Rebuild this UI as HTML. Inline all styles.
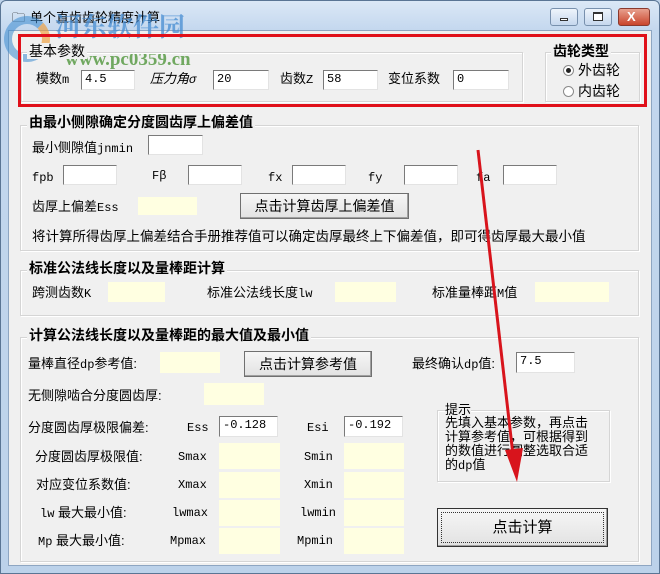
<!DOCTYPE html>
<html><head><meta charset="utf-8"><style>
*{margin:0;padding:0;box-sizing:border-box}
body{width:660px;height:574px;overflow:hidden;background:#bed3ea;font-family:"Liberation Sans","Noto Sans CJK SC",sans-serif;font-size:13px;color:#000;position:relative}
.a{position:absolute;white-space:nowrap;line-height:16px}
.frame{position:absolute;left:0;top:0;width:660px;height:574px;background:linear-gradient(#dbe8f6,#c3d7ee 30px,#bcd2ea);border:1px solid #5a7594;border-radius:6px 6px 0 0}
.body{position:absolute;left:8px;top:30px;width:644px;height:536px;background:#f0f0f0;border:1px solid #8ea6c2}
.g{position:absolute;border:1px solid #d5d5d5;box-shadow:inset 1px 1px 0 #fff,1px 1px 0 #fff}
.lg{position:absolute;background:#f0f0f0;font-weight:bold;font-size:14px;line-height:16px;padding:0 2px}
.in{position:absolute;background:#fff;border:1px solid #7a7a7a;border-right-color:#e3e3e3;border-bottom-color:#e3e3e3;font-family:"Liberation Mono",monospace;font-size:12px;line-height:17px;padding-left:3px}
.y{position:absolute;background:#ffffe1}
.btn{position:absolute;background:linear-gradient(#f6f6f6,#e2e2e2);border:1px solid #707070;box-shadow:inset -1px -1px 0 #a0a0a0;text-align:center;font-size:14px}
.m{font-family:"Liberation Mono",monospace;font-size:12px}
</style></head><body>
<div class="frame"></div>
<div class="a" style="left:12px;top:10px;font-size:13px">🗀</div>
<div class="a" style="left:30px;top:10px;font-size:13px">单个直齿齿轮精度计算</div>
<div style="position:absolute;left:550px;top:8px;width:28px;height:18px;border:1px solid #7890ad;border-radius:3px;background:linear-gradient(#eef4fb,#c6d8ee)"></div>
<div style="position:absolute;left:560px;top:18px;width:8px;height:3px;border:1px solid #333;background:#fff"></div>
<div style="position:absolute;left:584px;top:8px;width:28px;height:18px;border:1px solid #7890ad;border-radius:3px;background:linear-gradient(#eef4fb,#c6d8ee)"></div>
<div style="position:absolute;left:593px;top:12px;width:10px;height:9px;border:1px solid #333;border-top-width:2px;background:#fff"></div>
<div style="position:absolute;left:618px;top:8px;width:32px;height:18px;border:1px solid #8a3a2e;border-radius:3px;background:linear-gradient(#e8a08e,#c9452c)"></div>
<div class="a" style="left:627px;top:9px;color:#fff;font-weight:bold;font-size:13px">X</div>
<div class="body"></div>

<div style="position:absolute;left:4px;top:16px;width:46px;height:46px;border-radius:50%;border:8px solid rgba(60,140,210,.55);border-right-color:rgba(240,150,40,.6)"></div>
<div class="a" style="left:55px;top:14px;font-size:26px;line-height:28px;font-weight:bold;color:rgba(70,140,210,.75);font-family:'Liberation Serif','Noto Serif CJK SC',serif">河东软件园</div>
<div class="a" style="left:65px;top:50px;font-size:19px;line-height:20px;font-weight:bold;color:rgba(80,150,60,.8);font-family:'Liberation Serif',serif">www.pc0359.cn</div>

<div class="g" style="left:21px;top:52px;width:502px;height:50px"></div>
<div class="lg" style="left:27px;top:43px;font-weight:normal">基本参数</div>
<div class="a" style="left:36px;top:71px">模数<span class="m">m</span></div>
<div class="in" style="left:81px;top:70px;width:54px;height:20px">4.5</div>
<div class="a" style="left:150px;top:71px;font-style:italic">压力角<span class="m">σ</span></div>
<div class="in" style="left:213px;top:70px;width:56px;height:20px">20</div>
<div class="a" style="left:280px;top:71px">齿数<span class="m">Z</span></div>
<div class="in" style="left:323px;top:70px;width:55px;height:20px">58</div>
<div class="a" style="left:388px;top:71px">变位系数</div>
<div class="in" style="left:453px;top:70px;width:56px;height:20px">0</div>
<div class="g" style="left:545px;top:52px;width:95px;height:50px"></div>
<div class="lg" style="left:551px;top:43px">齿轮类型</div>
<div style="position:absolute;left:563px;top:65px;width:11px;height:11px;border-radius:50%;border:1px solid #8a8a8a;background:#fff"></div>
<div style="position:absolute;left:566px;top:68px;width:5px;height:5px;border-radius:50%;background:#222"></div>
<div class="a" style="left:578px;top:62px;font-size:14px">外齿轮</div>
<div style="position:absolute;left:563px;top:86px;width:11px;height:11px;border-radius:50%;border:1px solid #8a8a8a;background:#fff"></div>
<div class="a" style="left:578px;top:83px;font-size:14px">内齿轮</div>
<div style="position:absolute;left:18px;top:34px;width:629px;height:73px;border:3px solid #e0101a"></div>

<div class="g" style="left:20px;top:125px;width:619px;height:126px"></div>
<div class="lg" style="left:27px;top:114px">由最小侧隙确定分度圆齿厚上偏差值</div>
<div class="a" style="left:32px;top:140px">最小侧隙值<span class="m">jnmin</span></div>
<div class="in" style="left:148px;top:135px;width:55px;height:20px"></div>
<div class="a m" style="left:32px;top:170px">fpb</div>
<div class="in" style="left:63px;top:165px;width:54px;height:20px"></div>
<div class="a m" style="left:152px;top:168px">Fβ</div>
<div class="in" style="left:188px;top:165px;width:54px;height:20px"></div>
<div class="a m" style="left:268px;top:170px">fx</div>
<div class="in" style="left:292px;top:165px;width:54px;height:20px"></div>
<div class="a m" style="left:368px;top:170px">fy</div>
<div class="in" style="left:404px;top:165px;width:54px;height:20px"></div>
<div class="a m" style="left:476px;top:170px">fa</div>
<div class="in" style="left:503px;top:165px;width:54px;height:20px"></div>
<div class="a" style="left:32px;top:199px">齿厚上偏差<span class="m">Ess</span></div>
<div class="y" style="left:138px;top:197px;width:59px;height:18px"></div>
<div class="btn" style="left:240px;top:193px;width:169px;height:26px;line-height:24px">点击计算齿厚上偏差值</div>
<div class="a" style="left:32px;top:229px;font-size:13.5px">将计算所得齿厚上偏差结合手册推荐值可以确定齿厚最终上下偏差值，即可得齿厚最大最小值</div>

<div class="g" style="left:20px;top:270px;width:619px;height:46px"></div>
<div class="lg" style="left:27px;top:260px">标准公法线长度以及量棒距计算</div>
<div class="a" style="left:32px;top:285px">跨测齿数<span class="m">K</span></div>
<div class="y" style="left:108px;top:282px;width:57px;height:20px"></div>
<div class="a" style="left:207px;top:285px">标准公法线长度<span class="m">lw</span></div>
<div class="y" style="left:335px;top:282px;width:61px;height:20px"></div>
<div class="a" style="left:432px;top:285px">标准量棒距<span class="m">M</span>值</div>
<div class="y" style="left:535px;top:282px;width:74px;height:20px"></div>

<div class="g" style="left:20px;top:337px;width:619px;height:225px"></div>
<div class="lg" style="left:27px;top:327px">计算公法线长度以及量棒距的最大值及最小值</div>
<div class="a" style="left:28px;top:356px">量棒直径<span class="m">dp</span>参考值:</div>
<div class="y" style="left:160px;top:352px;width:60px;height:21px"></div>
<div class="btn" style="left:244px;top:351px;width:128px;height:26px;line-height:24px">点击计算参考值</div>
<div class="a" style="left:412px;top:356px">最终确认<span class="m">dp</span>值:</div>
<div class="in" style="left:516px;top:352px;width:59px;height:21px">7.5</div>
<div class="a" style="left:28px;top:388px">无侧隙啮合分度圆齿厚:</div>
<div class="y" style="left:204px;top:383px;width:60px;height:22px"></div>
<div class="a" style="left:28px;top:420px">分度圆齿厚极限偏差:</div>
<div class="a m" style="left:187px;top:420px">Ess</div>
<div class="in" style="left:219px;top:416px;width:59px;height:21px">-0.128</div>
<div class="a m" style="left:307px;top:420px">Esi</div>
<div class="in" style="left:344px;top:416px;width:59px;height:21px">-0.192</div>

<div class="a" style="left:35px;top:449px">分度圆齿厚极限值:</div>
<div class="a m" style="left:178px;top:449px">Smax</div>
<div class="y" style="left:219px;top:443px;width:61px;height:26px"></div>
<div class="a m" style="left:304px;top:449px">Smin</div>
<div class="y" style="left:344px;top:443px;width:60px;height:26px"></div>

<div class="a" style="left:36px;top:477px">对应变位系数值:</div>
<div class="a m" style="left:178px;top:477px">Xmax</div>
<div class="y" style="left:219px;top:472px;width:61px;height:26px"></div>
<div class="a m" style="left:304px;top:477px">Xmin</div>
<div class="y" style="left:344px;top:472px;width:60px;height:26px"></div>

<div class="a" style="left:40px;top:505px"><span class="m">lw</span> 最大最小值:</div>
<div class="a m" style="left:172px;top:505px">lwmax</div>
<div class="y" style="left:219px;top:500px;width:61px;height:26px"></div>
<div class="a m" style="left:300px;top:505px">lwmin</div>
<div class="y" style="left:344px;top:500px;width:60px;height:26px"></div>

<div class="a" style="left:38px;top:533px"><span class="m">Mp</span> 最大最小值:</div>
<div class="a m" style="left:170px;top:533px">Mpmax</div>
<div class="y" style="left:219px;top:528px;width:61px;height:26px"></div>
<div class="a m" style="left:297px;top:533px">Mpmin</div>
<div class="y" style="left:344px;top:528px;width:60px;height:26px"></div>

<div class="g" style="left:437px;top:410px;width:173px;height:72px"></div>
<div class="a" style="left:445px;top:403px;background:#f0f0f0;line-height:14px;font-size:13px">提示</div>
<div class="a" style="left:445px;top:416px;line-height:14px;font-size:13px">先填入基本参数，再点击<br>计算参考值，可根据得到<br>的数值进行圆整选取合适<br>的<span class="m">dp</span>值</div>
<div class="btn" style="left:437px;top:508px;width:171px;height:39px;line-height:37px;font-size:15px;border-color:#333"><div style="position:absolute;left:3px;top:3px;right:3px;bottom:3px;border:1px dotted #333"></div>点击计算</div>

<svg style="position:absolute;left:0;top:0" width="660" height="574">
<line x1="478" y1="150" x2="513" y2="455" stroke="#d8141c" stroke-width="3"/>
<polygon points="505,450 523,448 517,482" fill="#d8141c"/>
</svg>
</body></html>
